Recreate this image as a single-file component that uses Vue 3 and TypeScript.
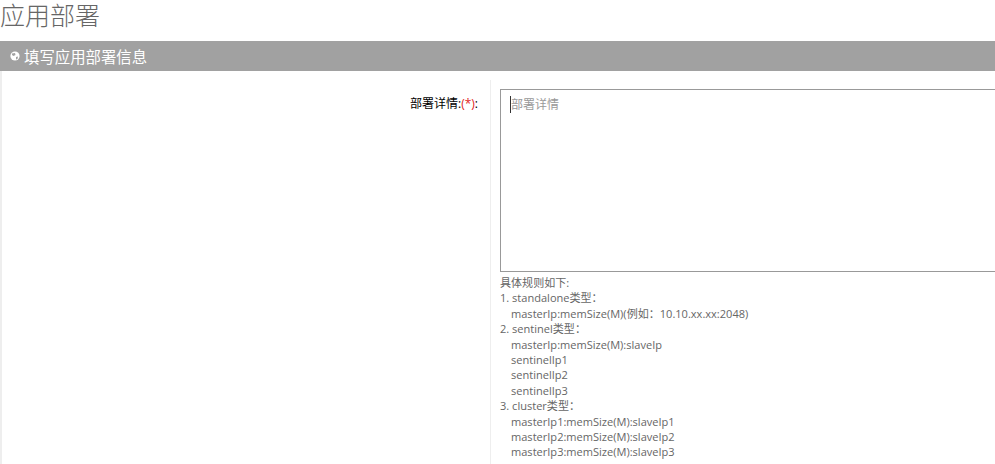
<script setup lang="ts">
const lines: { t: string; indent: boolean }[] = [
  { t: '具体规则如下:', indent: false },
  { t: '1. standalone类型：', indent: false },
  { t: 'masterIp:memSize(M)(例如：10.10.xx.xx:2048)', indent: true },
  { t: '2. sentinel类型：', indent: false },
  { t: 'masterIp:memSize(M):slaveIp', indent: true },
  { t: 'sentinelIp1', indent: true },
  { t: 'sentinelIp2', indent: true },
  { t: 'sentinelIp3', indent: true },
  { t: '3. cluster类型：', indent: false },
  { t: 'masterIp1:memSize(M):slaveIp1', indent: true },
  { t: 'masterIp2:memSize(M):slaveIp2', indent: true },
  { t: 'masterIp3:memSize(M):slaveIp3', indent: true },
]
</script>

<template>
  <div class="page">
    <h3 class="title">应用部署</h3>
    <div class="portlet">
      <div class="head">
        <svg class="globe" width="10" height="10" viewBox="0 0 10 10">
          <circle cx="5" cy="5" r="4.6" fill="#fff" />
          <path d="M2 2.5 L5 2 L5.5 4 L3.5 5 L2 4 Z M6 6 L8 5.5 L7.5 8 L6 8.5 Z" fill="#a1a1a1" />
        </svg>
        <span>填写应用部署信息</span>
      </div>
      <div class="body">
        <div class="label">部署详情:<span class="req">(*)</span>:</div>
        <div class="field">
          <div class="box"><span class="caret"></span><span class="ph">部署详情</span></div>
          <div class="help">
            <div v-for="l in lines" :key="l.t" :class="{ indent: l.indent }">{{ l.t }}</div>
          </div>
        </div>
      </div>
    </div>
  </div>
</template>

<style>
html, body { margin: 0; background: #fff; overflow: hidden; }
</style>

<style scoped>
.page { width: 995px; height: 464px; overflow: hidden; font-family: "Open Sans", "Noto Sans CJK SC", sans-serif; font-size: 12px; color: #333; }
.title { margin: 0; height: 41px; font-size: 25px; line-height: 31px; font-weight: 300; color: #666; }
.portlet { border-left: 2px solid #eee; }
.head { height: 30px; margin-left: -2px; background: #a1a1a1; color: #fff; display: flex; align-items: center; gap: 4px; padding-left: 10px; font-size: 15.4px; }
.body { display: flex; padding-top: 9px; height: 393px; box-sizing: border-box; }
.label { flex: none; width: 476px; padding-top: 15px; text-align: right; color: #000; line-height: 17px; box-sizing: border-box; }
.req { color: #e02222; }
.field { flex: none; width: 600px; margin-left: 12px; padding-left: 9px; padding-top: 9px; border-left: 1px solid #eee; }
.box { width: 600px; height: 183px; border: 1px solid #999; box-sizing: border-box; padding: 6px 9px; display: flex; align-items: flex-start; color: #999; line-height: 17px; }
.caret { width: 1px; height: 17px; background: #333; flex: none; }
.ph { color: #999; }
.help { margin-top: 3px; font-size: 11.05px; line-height: 15.4px; color: #666; white-space: nowrap; }
.indent { padding-left: 11px; }
</style>
